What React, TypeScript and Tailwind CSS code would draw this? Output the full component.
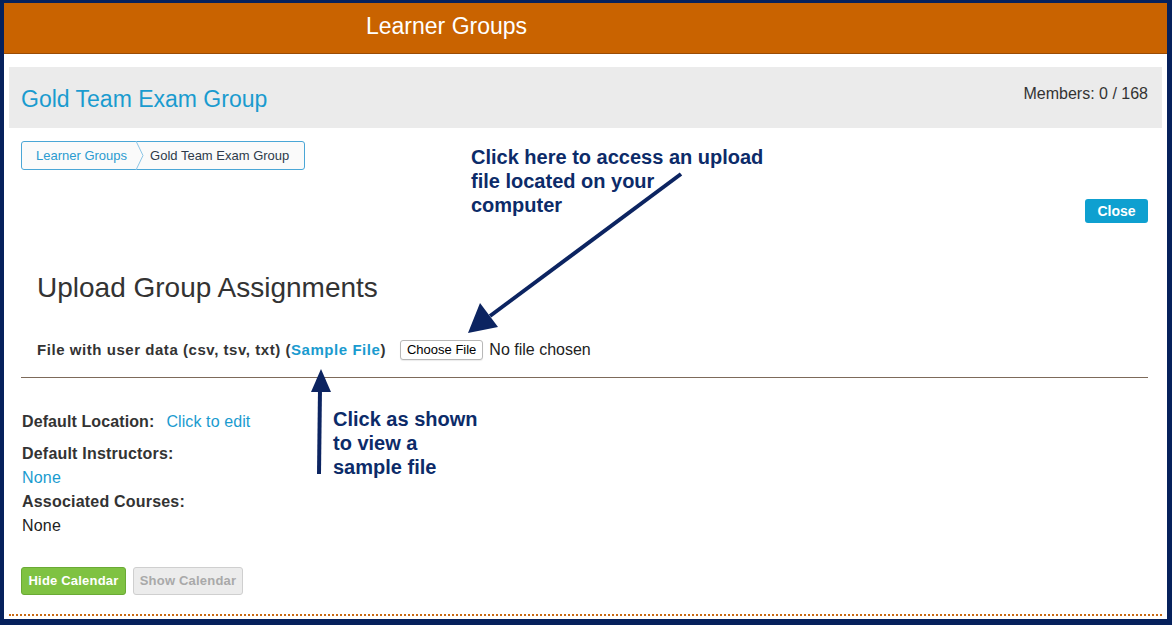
import React from 'react';

const annotationText = 'font-["Liberation_Sans",Arial,sans-serif] text-[20px] font-bold leading-[24px] text-[#0c2b69]';

function Arrows() {
  return (
    <svg
      className="pointer-events-none absolute left-0 top-0"
      width={1172}
      height={625}
      viewBox="0 0 1172 625"
    >
      {/* upload arrow */}
      <line x1={681} y1={174} x2={490} y2={316} stroke="#0c2461" strokeWidth={4} />
      <polygon points="468,333 480,303 498,327" fill="#0c2461" />
      {/* sample file arrow */}
      <line x1={319} y1={474} x2={320} y2={388} stroke="#0c2461" strokeWidth={4} />
      <polygon points="321,369 311,392 331,392" fill="#0c2461" />
    </svg>
  );
}

export default function App() {
  return (
    <div className="relative h-[625px] w-[1172px] overflow-hidden bg-[#06215c] pb-[6px] pl-[4px] pr-[5px] pt-[3px] font-['Liberation_Sans',Arial,sans-serif]">
      <div className="flex h-full flex-col bg-white">
        {/* header bar */}
        <div className="flex h-[51px] shrink-0 items-center border-b border-[#9a4c05] bg-[#c96300] pb-[4px] pl-[362px]">
          <span className="text-[23px] text-white">Learner Groups</span>
        </div>

        {/* group title */}
        <div className="mx-[5px] mt-[13px] flex h-[61px] items-start justify-between bg-[#ebebeb] pl-[12px] pr-[14px]">
          <h1 className="mt-[17px] text-[23px] leading-[30px] text-[#1a9bcf]">Gold Team Exam Group</h1>
          <span className="mt-[15px] text-[16px] text-[#333]">Members: 0 / 168</span>
        </div>

        <div className="flex flex-col pl-[17px] pr-[19px]">
          {/* breadcrumb */}
          <div className="mt-[13px] flex h-[29px] w-[284px] items-center rounded-[3px] border border-[#4aa6d6] bg-[#fafafa] text-[13px]">
            <span className="pl-[14px] pr-[8px] text-[#2b9bd0]">Learner Groups</span>
            <svg width={10} height={29} viewBox="0 0 10 29" className="shrink-0">
              <polyline points="1,0 8,14.5 1,29" fill="none" stroke="#8cc6e6" strokeWidth={1} />
            </svg>
            <span className="pl-[5px] text-[#2d3a4a]">Gold Team Exam Group</span>
          </div>

          <div className="mt-[29px] flex justify-end">
            <button className="h-[24px] w-[63px] rounded-[3px] bg-[#0ea0d0] text-[14px] font-bold text-white">
              Close
            </button>
          </div>

          <h2 className="ml-[16px] mt-[49px] text-[28px] leading-[32px] text-[#333]">Upload Group Assignments</h2>

          <div className="ml-[16px] mt-[35px] flex h-[22px] items-center">
            <span className="text-[15px] font-bold tracking-[0.55px] text-[#333]">
              File with user data (csv, tsv, txt) (<span className="text-[#1a9bcf]">Sample File</span>)
            </span>
            <span className="ml-[14px] flex h-[20px] items-center rounded-[3px] border border-[#b8b8b8] bg-white px-[6px] text-[13px] text-black shadow-[0_1px_1px_rgba(0,0,0,0.08)]">
              Choose File
            </span>
            <span className="ml-[6px] text-[16px] text-[#222]">No file chosen</span>
          </div>

          <div className="mt-[16px] h-px bg-[#7d6a5a]" />

          <div className="mt-[32px] flex h-[24px] items-center text-[16px] tracking-[0.1px]">
            <span className="ml-px font-bold text-[#333]">Default Location:</span>
            <span className="ml-[12px] text-[#1a9bcf]">Click to edit</span>
          </div>
          <div className="mt-[8px] flex flex-col pl-px text-[16px] leading-[24px] tracking-[0.2px]">
            <span className="font-bold text-[#333]">Default Instructors:</span>
            <span className="text-[#1a9bcf]">None</span>
            <span className="font-bold text-[#333]">Associated Courses:</span>
            <span className="text-[#222]">None</span>
          </div>

          <div className="mt-[29px] flex gap-[7px]">
            <button className="h-[28px] w-[105px] rounded-[3px] border border-[#6aaa35] bg-[#7fc242] text-[13px] font-bold tracking-[0.2px] text-white">
              Hide Calendar
            </button>
            <button className="h-[28px] w-[110px] rounded-[3px] border border-[#cfcfcf] bg-[#ececec] text-[13px] font-bold tracking-[0.2px] text-[#a9a9a9]">
              Show Calendar
            </button>
          </div>
        </div>

        <div className="mx-[5px] mt-[19px] border-t-2 border-dotted border-[#c96a14]" />
      </div>

      {/* annotations */}
      <div className={`absolute left-[471px] top-[145px] ${annotationText}`}>
        Click here to access an upload
        <br />
        file located on your
        <br />
        computer
      </div>
      <div className={`absolute left-[333px] top-[407px] ${annotationText}`}>
        Click as shown
        <br />
        to view a
        <br />
        sample file
      </div>
      <Arrows />
    </div>
  );
}
